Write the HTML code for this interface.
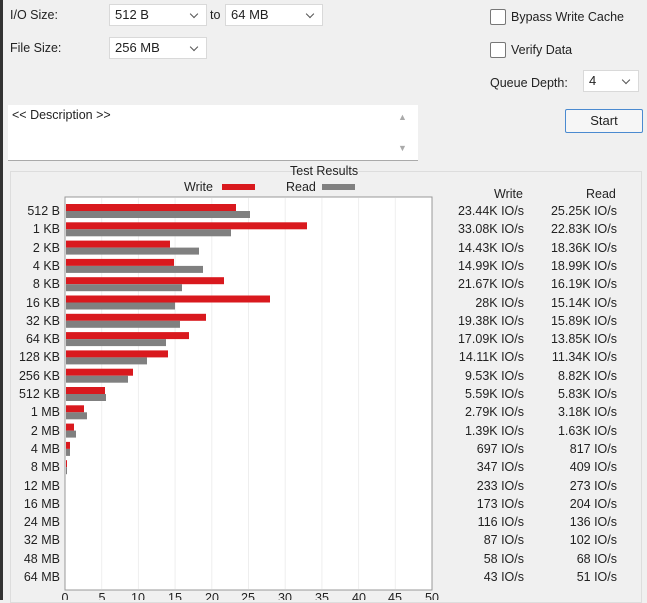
<!DOCTYPE html><html><head><style>
body{margin:0;width:647px;height:600px;background:#f0f0f0;font-family:"Liberation Sans",sans-serif;font-size:12.5px;color:#222;position:relative;overflow:hidden}
.a{position:absolute;white-space:nowrap}
.sel{position:absolute;background:#fff;border:1px solid #d9d9d9;height:22px;box-sizing:border-box;padding:2px 5px;font-size:13px}
.sel:after{content:"";position:absolute;right:9px;top:6px;width:5px;height:5px;border-right:1px solid #555;border-bottom:1px solid #555;transform:rotate(45deg)}
.cb{position:absolute;width:14px;height:14px;border:1px solid #777;border-radius:2px;background:#fff}
.r{position:absolute;text-align:right;font-size:12.5px}
</style></head><body>
<div class="a" style="left:0;top:0;width:3px;height:600px;background:#333"></div>
<div class="a" style="left:10px;top:8px">I/O Size:</div>
<div class="a" style="left:10px;top:41px">File Size:</div>
<div class="sel" style="left:109px;top:4px;width:98px">512 B</div>
<div class="a" style="left:210px;top:8px">to</div>
<div class="sel" style="left:225px;top:4px;width:98px">64 MB</div>
<div class="sel" style="left:109px;top:37px;width:98px">256 MB</div>
<div class="cb" style="left:490px;top:9px"></div><div class="a" style="left:511px;top:10px">Bypass Write Cache</div>
<div class="cb" style="left:490px;top:42px"></div><div class="a" style="left:511px;top:43px">Verify Data</div>
<div class="a" style="left:490px;top:76px">Queue Depth:</div>
<div class="sel" style="left:583px;top:70px;width:56px">4</div>
<div class="a" style="left:565px;top:109px;width:76px;height:22px;border:1px solid #4a8ad0;background:#f6f6f6;border-radius:2px;text-align:center;line-height:22px;font-size:13px">Start</div>
<div class="a" style="left:8px;top:105px;width:410px;height:55px;background:#fff;border-bottom:1px solid #aaa"></div>
<div class="a" style="left:12px;top:108px">&lt;&lt; Description &gt;&gt;</div>
<div class="a" style="left:398px;top:112px;color:#aaa;font-size:9px">▲</div>
<div class="a" style="left:398px;top:143px;color:#aaa;font-size:9px">▼</div>
<div class="a" style="left:10px;top:171px;width:630px;height:430px;border:1px solid #ddd"></div>
<div class="a" style="left:290px;top:164px">Test Results</div>
<div class="a" style="left:184px;top:180px">Write</div><div class="a" style="left:222px;top:184px;width:33px;height:6px;background:#d9191e"></div>
<div class="a" style="left:286px;top:180px">Read</div><div class="a" style="left:322px;top:184px;width:33px;height:6px;background:#808080"></div>
<div class="a" style="left:494px;top:187px">Write</div><div class="a" style="left:586px;top:187px">Read</div>
<svg class="a" style="left:0;top:0" width="647" height="600">
<rect x="65" y="197" width="367" height="393" fill="#fff" stroke="#999"/>
<g stroke="#eee"><line x1="101.7" y1="198" x2="101.7" y2="589"/><line x1="138.4" y1="198" x2="138.4" y2="589"/><line x1="175.1" y1="198" x2="175.1" y2="589"/><line x1="211.8" y1="198" x2="211.8" y2="589"/><line x1="248.5" y1="198" x2="248.5" y2="589"/><line x1="285.2" y1="198" x2="285.2" y2="589"/><line x1="321.9" y1="198" x2="321.9" y2="589"/><line x1="358.6" y1="198" x2="358.6" y2="589"/><line x1="395.3" y1="198" x2="395.3" y2="589"/></g>
<g id="bars"></g>
<g font-family="Liberation Sans" font-size="12.5" fill="#222" text-anchor="middle"><text x="65" y="602">0</text><text x="102" y="602">5</text><text x="138" y="602">10</text><text x="175" y="602">15</text><text x="212" y="602">20</text><text x="248" y="602">25</text><text x="285" y="602">30</text><text x="322" y="602">35</text><text x="359" y="602">40</text><text x="395" y="602">45</text><text x="432" y="602">50</text></g>
</svg>
<div id="rows"></div>
<script>
var L=["512 B","1 KB","2 KB","4 KB","8 KB","16 KB","32 KB","64 KB","128 KB","256 KB","512 KB","1 MB","2 MB","4 MB","8 MB","12 MB","16 MB","24 MB","32 MB","48 MB","64 MB"];
var W=[236,307,170,174,224,270,206,189,168,133,105,84,74,70,67,66,65,65,65,65,65];
var R=[250,231,199,203,182,175,180,166,147,128,106,87,76,70,67,66,65,65,65,65,65];
var WV=["23.44K","33.08K","14.43K","14.99K","21.67K","28K","19.38K","17.09K","14.11K","9.53K","5.59K","2.79K","1.39K","697","347","233","173","116","87","58","43"];
var RV=["25.25K","22.83K","18.36K","18.99K","16.19K","15.14K","15.89K","13.85K","11.34K","8.82K","5.83K","3.18K","1.63K","817","409","273","204","136","102","68","51"];
var s="",h="";
for(var i=0;i<21;i++){var c=212+i*18.3;
s+='<rect x="66" y="'+(c-8)+'" width="'+(W[i]-66)+'" height="7" fill="#d9191e"/><rect x="66" y="'+(c-1)+'" width="'+(R[i]-66)+'" height="7" fill="#808080"/>';
h+='<div class="r" style="left:0;width:60px;top:'+(c-8)+'px">'+L[i]+'</div><div class="r" style="left:440px;width:84px;top:'+(c-8)+'px">'+WV[i]+' IO/s</div><div class="r" style="left:530px;width:87px;top:'+(c-8)+'px">'+RV[i]+' IO/s</div>';}
document.getElementById("bars").innerHTML=s;document.getElementById("rows").innerHTML=h;
</script>
</body></html>
